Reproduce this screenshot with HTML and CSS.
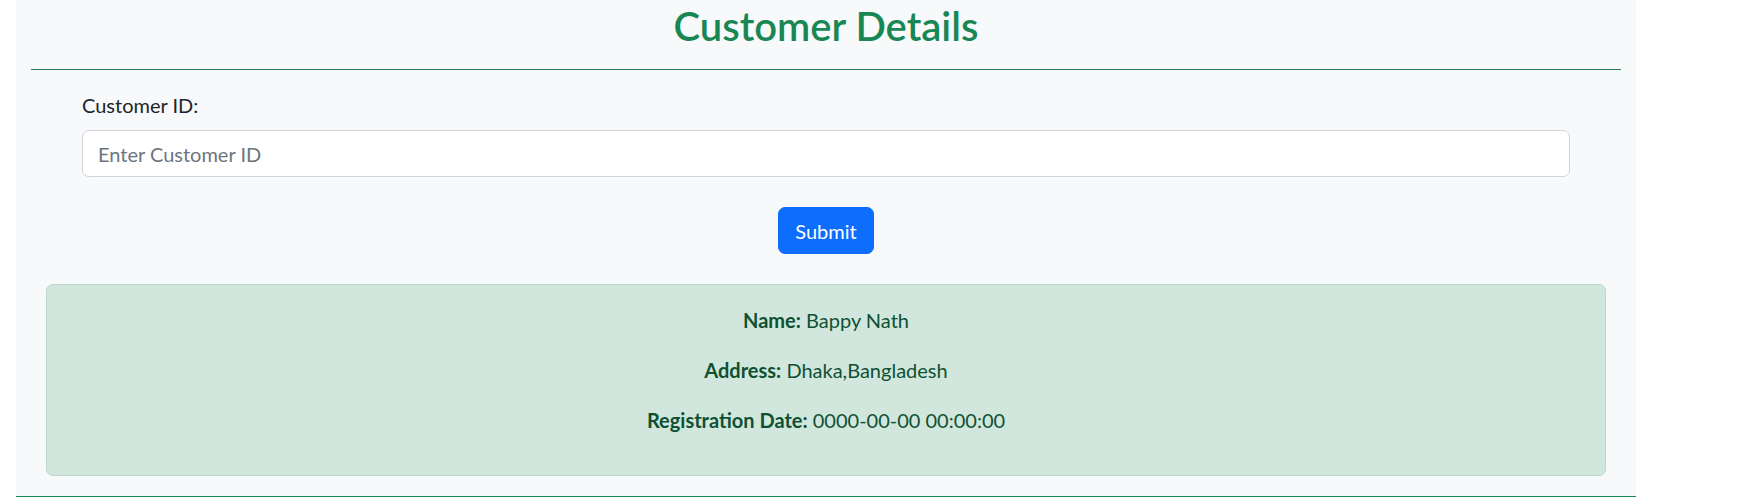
FILE: index.html
```html
<!DOCTYPE html>
<html lang="en">
<head>
<meta charset="utf-8">
<title>Customer Details</title>
<link rel="stylesheet" href="styles.css">
</head>
<body>
<div class="panel">
  <h2 class="title">Customer Details</h2>
  <hr class="rule">
  <form class="form">
    <label class="label" for="cid">Customer ID:</label>
    <input class="input" id="cid" type="text" placeholder="Enter Customer ID">
    <div class="actions">
      <button class="btn" type="button">Submit</button>
    </div>
  </form>
  <div class="result">
    <p class="row"><strong>Name:</strong> Bappy Nath</p>
    <p class="row"><strong>Address:</strong> Dhaka,Bangladesh</p>
    <p class="row"><strong>Registration Date:</strong> 0000-00-00 00:00:00</p>
  </div>
</div>
</body>
</html>
```
FILE: styles.css
```css
html, body {
  margin: 0;
  padding: 0;
  background: #ffffff;
}
body {
  font-family: "Segoe UI", Lato, "Noto Sans", sans-serif;
  font-size: 20px;
  line-height: 30px;
  color: #212529;
}
.panel {
  margin-left: 16px;
  width: 1620px;
  box-sizing: border-box;
  background: #f8f9fa;
  padding: 0 15px 20px;
  border-bottom: 1px solid #198754;
}
.title {
  margin: 0;
  padding-top: 2px;
  height: 67px;
  box-sizing: border-box;
  text-align: center;
  font-size: 40px;
  line-height: 48px;
  font-weight: 600;
  color: #198754;
}
.rule {
  margin: 2px 0 20px;
  border: 0;
  border-top: 1px solid #2b7d58;
  height: 0;
}
.form {
  padding: 0 51px;
  display: flex;
  flex-direction: column;
}
.label {
  display: block;
  margin-bottom: 10px;
  line-height: 30px;
}
.input {
  box-sizing: border-box;
  width: 100%;
  height: 47px;
  padding: 0 15px;
  font-family: inherit;
  font-size: 20px;
  color: #212529;
  background: #ffffff;
  border: 1px solid #ced4da;
  border-radius: 7px;
  outline: none;
}
.input::placeholder {
  color: #6c757d;
}
.actions {
  display: flex;
  justify-content: center;
  padding: 30px 0;
}
.btn {
  box-sizing: border-box;
  height: 47px;
  padding: 0 16px;
  font-family: inherit;
  font-size: 20px;
  color: #ffffff;
  background: #0d6efd;
  border: 1px solid #0d6efd;
  border-radius: 7px;
}
.result {
  margin: 0 15px;
  padding: 20px 20px 20px;
  background: #d1e7dd;
  border: 1px solid #badbcc;
  border-radius: 7px;
  color: #0f5132;
  text-align: center;
}
.row {
  margin: 0 0 20px;
}
.row strong {
  font-weight: 700;
}
```
